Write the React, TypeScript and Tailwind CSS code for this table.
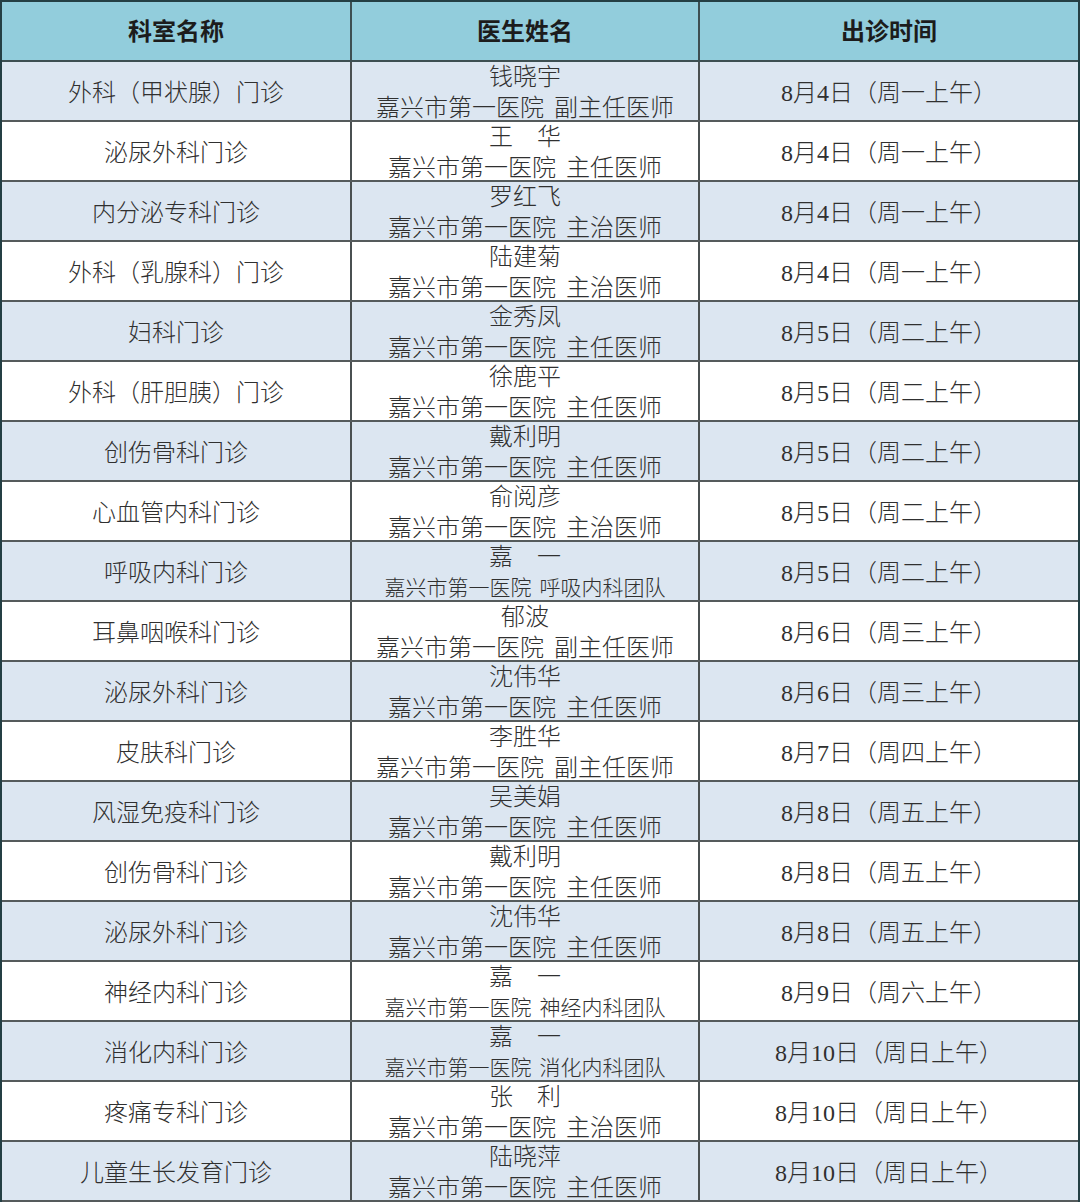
import React from "react";

type Row = { dept: string; name: string; role: string; small?: boolean; date: string };

const rows: Row[] = [
  { dept: "外科（甲状腺）门诊", name: "钱晓宇", role: "副主任医师", date: "8月4日（周一上午）" },
  { dept: "泌尿外科门诊", name: "王　华", role: "主任医师", date: "8月4日（周一上午）" },
  { dept: "内分泌专科门诊", name: "罗红飞", role: "主治医师", date: "8月4日（周一上午）" },
  { dept: "外科（乳腺科）门诊", name: "陆建菊", role: "主治医师", date: "8月4日（周一上午）" },
  { dept: "妇科门诊", name: "金秀凤", role: "主任医师", date: "8月5日（周二上午）" },
  { dept: "外科（肝胆胰）门诊", name: "徐鹿平", role: "主任医师", date: "8月5日（周二上午）" },
  { dept: "创伤骨科门诊", name: "戴利明", role: "主任医师", date: "8月5日（周二上午）" },
  { dept: "心血管内科门诊", name: "俞阅彦", role: "主治医师", date: "8月5日（周二上午）" },
  { dept: "呼吸内科门诊", name: "嘉　一", role: "呼吸内科团队", small: true, date: "8月5日（周二上午）" },
  { dept: "耳鼻咽喉科门诊", name: "郁波", role: "副主任医师", date: "8月6日（周三上午）" },
  { dept: "泌尿外科门诊", name: "沈伟华", role: "主任医师", date: "8月6日（周三上午）" },
  { dept: "皮肤科门诊", name: "李胜华", role: "副主任医师", date: "8月7日（周四上午）" },
  { dept: "风湿免疫科门诊", name: "吴美娟", role: "主任医师", date: "8月8日（周五上午）" },
  { dept: "创伤骨科门诊", name: "戴利明", role: "主任医师", date: "8月8日（周五上午）" },
  { dept: "泌尿外科门诊", name: "沈伟华", role: "主任医师", date: "8月8日（周五上午）" },
  { dept: "神经内科门诊", name: "嘉　一", role: "神经内科团队", small: true, date: "8月9日（周六上午）" },
  { dept: "消化内科门诊", name: "嘉　一", role: "消化内科团队", small: true, date: "8月10日（周日上午）" },
  { dept: "疼痛专科门诊", name: "张　利", role: "主治医师", date: "8月10日（周日上午）" },
  { dept: "儿童生长发育门诊", name: "陆晓萍", role: "主任医师", date: "8月10日（周日上午）" },
];

export default function App() {
  return (
    <div
      className="w-[1080px] h-[1202px] bg-white overflow-hidden"
      style={{ fontFamily: '"Liberation Serif", "Noto Sans CJK SC", serif' }}
    >
      <div className="w-[1080px] border-l-2 border-r-2 border-t-2 border-[#243f44]">
        <div className="grid grid-cols-[350px_348px_378px] h-[60px] bg-[#92cddc] border-b-2 border-[#3d4f52] text-[24px] font-bold text-[#1c1c1c]">
          <div className="flex items-center justify-center border-r-2 border-[#3d4f52] pt-[2px]">科室名称</div>
          <div className="flex items-center justify-center border-r-2 border-[#3d4f52] pt-[2px]">医生姓名</div>
          <div className="flex items-center justify-center pt-[2px]">出诊时间</div>
        </div>
        {rows.map((r, i) => (
          <div
            key={i}
            className={`grid grid-cols-[350px_348px_378px] h-[60px] border-b-2 border-[#555b5c] text-[24px] font-light text-[#303030] ${
              i % 2 === 0 ? "bg-[#dce6f1]" : "bg-white"
            }`}
          >
            <div className="flex items-center justify-center border-r-2 border-[#4a5051] pt-[3px]">{r.dept}</div>
            <div className="flex flex-col items-center justify-start border-r-2 border-[#4a5051]">
              <div className="whitespace-pre leading-[30px]">{r.name}</div>
              <div
                className={`whitespace-pre mt-[4px] leading-[24px] ${r.small ? "text-[21px]" : ""}`}
              >
                嘉兴市第一医院
                <span className={r.small ? "ml-[8px]" : "ml-[10px]"}>{r.role}</span>
              </div>
            </div>
            <div className="flex items-center justify-center pt-[3px]">{r.date}</div>
          </div>
        ))}
      </div>
    </div>
  );
}
